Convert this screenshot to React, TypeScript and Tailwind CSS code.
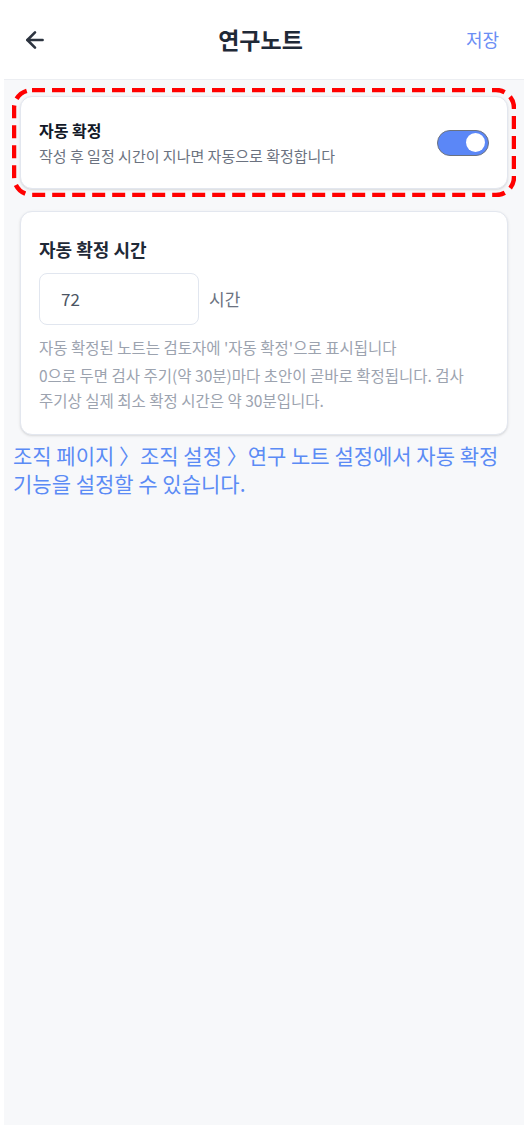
import { ArrowLeft } from 'lucide-react';

const font = { fontFamily: '"Noto Sans CJK KR", "Noto Sans", sans-serif' };

function Toggle({ on }: { on: boolean }) {
  return (
    <div
      className={`flex h-[26px] w-[52px] shrink-0 items-center rounded-full border-[1.5px] border-[#6b7280] px-[3px] ${
        on ? 'justify-end bg-[#5b87f7]' : 'justify-start bg-gray-200'
      }`}
    >
      <div className="h-[19px] w-[19px] rounded-full bg-white" />
    </div>
  );
}

// 강조 표시용 빨간 점선 테두리
function DashedHighlight({ children }: { children: React.ReactNode }) {
  return (
    <div className="relative p-2">
      <svg className="pointer-events-none absolute inset-0 h-full w-full" preserveAspectRatio="none">
        <rect
          x="2"
          y="2"
          width="calc(100% - 4px)"
          height="calc(100% - 4px)"
          rx="18"
          fill="none"
          stroke="#ff0000"
          strokeWidth="4.5"
          strokeDasharray="13 7"
        />
      </svg>
      {children}
    </div>
  );
}

export default function App() {
  return (
    <div className="flex min-h-[1125px] flex-col bg-white" style={font}>
      {/* 헤더 */}
      <header className="grid h-[79px] shrink-0 grid-cols-[1fr_auto_1fr] items-center bg-white pl-[22px] pr-[25px]">
        <ArrowLeft className="h-[26px] w-[26px] text-[#2d3440]" strokeWidth={2.4} />
        <h1 className="text-[23px] font-bold text-[#1f2937]">연구노트</h1>
        <button type="button" className="justify-self-end text-[18px] text-[#6b8ef5]">
          저장
        </button>
      </header>

      <main className="ml-[4px] flex-1 border-t border-[#eceef2] bg-[#f7f8fa] px-2 pt-[8px]">
        {/* 자동 확정 토글 */}
        <DashedHighlight>
          <div className="flex items-center justify-between rounded-xl border border-[#e3e7ef] bg-white px-[18px] py-[22px] shadow-sm">
            <div>
              <h3 className="text-[16px] font-bold leading-[22px] text-[#111827]">자동 확정</h3>
              <p className="mt-[4px] text-[15px] leading-[21px] text-[#6b7280]">
                작성 후 일정 시간이 지나면 자동으로 확정합니다
              </p>
            </div>
            <Toggle on />
          </div>
        </DashedHighlight>

        {/* 자동 확정 시간 */}
        <div className="mx-2 mt-[14px] rounded-xl border border-[#e3e7ef] bg-white px-[18px] pb-[21px] pt-[25px] shadow-sm">
          <h3 className="text-[18px] font-bold leading-[24px] text-[#1f2937]">자동 확정 시간</h3>
          <div className="mt-[12px] flex items-center gap-[10px]">
            <div className="flex h-[52px] w-[160px] items-center rounded-lg border border-[#e1e6ef] px-[21px] text-[17px] text-[#4b5563]">
              72
            </div>
            <span className="text-[17px] text-[#6b7280]">시간</span>
          </div>
          <p className="mt-[10px] break-keep text-[15.5px] leading-[24px] text-[#9ca3af]">
            자동 확정된 노트는 검토자에 '자동 확정'으로 표시됩니다
          </p>
          <p className="mt-[4px] break-keep text-[15.5px] leading-[25px] text-[#9ca3af]">
            0으로 두면 검사 주기(약 30분)마다 초안이 곧바로 확정됩니다. 검사 주기상 실제 최소 확정 시간은 약 30분입니다.
          </p>
        </div>

        <p className="ml-px mt-[6px] break-keep text-[21px] leading-[28px] text-[#5b8bf5]">
          조직 페이지 〉조직 설정 〉연구 노트 설정에서 자동 확정 기능을 설정할 수 있습니다.
        </p>
      </main>
    </div>
  );
}
